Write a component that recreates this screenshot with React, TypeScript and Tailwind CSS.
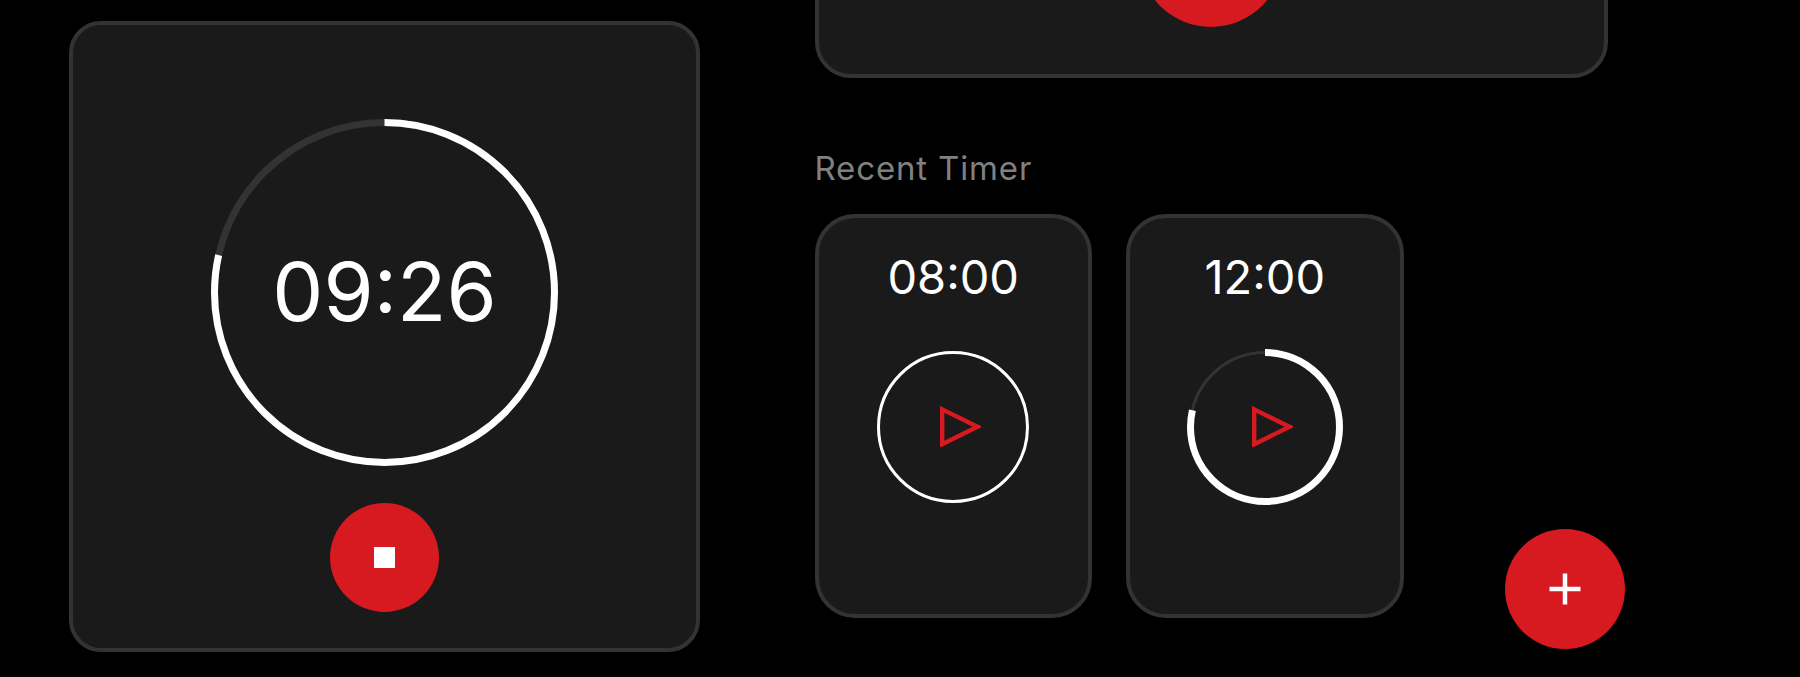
import React from "react";

const INTER = { fontFamily: "Inter, sans-serif" };

function Ring({
  size,
  stroke,
  trackStroke,
  fraction,
}: {
  size: number;
  stroke: number;
  trackStroke: number;
  fraction: number;
}) {
  const r = size / 2 - stroke / 2;
  const c = 2 * Math.PI * r;
  return (
    <svg width={size} height={size} viewBox={`0 0 ${size} ${size}`} className="block">
      <circle cx={size / 2} cy={size / 2} r={r} fill="none" stroke="#333333" strokeWidth={trackStroke} />
      <circle
        cx={size / 2}
        cy={size / 2}
        r={r}
        fill="none"
        stroke="#ffffff"
        strokeWidth={stroke}
        strokeDasharray={`${c * fraction} ${c}`}
        transform={`rotate(-90 ${size / 2} ${size / 2})`}
      />
    </svg>
  );
}

function PlayIcon() {
  return (
    <svg width="41" height="41" viewBox="0 0 41 41" className="block">
      <path d="M2.2 3.4 L37.5 20.8 L2.2 38.2 Z" fill="none" stroke="#d71920" strokeWidth="4.4" strokeLinejoin="miter" />
    </svg>
  );
}

function RecentCard({ time, size, stroke, track, fraction, ringClass }: { time: string; size: number; stroke: number; track: number; fraction: number; ringClass: string }) {
  return (
    <div className="w-[277.5px] h-[404px] rounded-[40px] border-4 border-[#333333] bg-[#1a1a1a] flex flex-col items-center">
      <div className="mt-[26.5px] h-[64px] flex items-center text-[47px] leading-none font-normal text-white">{time}</div>
      <div className={ringClass}>
        <Ring size={size} stroke={stroke} trackStroke={track} fraction={fraction} />
        <div className="absolute inset-0 flex items-center justify-center pl-[15px]">
          <PlayIcon />
        </div>
      </div>
    </div>
  );
}

export default function App() {
  return (
    <div style={INTER} className="relative w-[1800px] h-[677px] overflow-hidden bg-black flex">
      <div className="ml-[69px] mt-[21px] w-[631px] h-[631px] rounded-[32px] border-4 border-[#333333] bg-[#1a1a1a] flex flex-col items-center">
        <div className="relative mt-[94px] w-[347px] h-[347px]">
          <Ring size={347} stroke={7} trackStroke={7} fraction={0.785} />
          <div className="absolute inset-0 flex items-center justify-center text-[81px] leading-none font-normal text-white">09:26</div>
        </div>
        <div className="mt-[37px] w-[109px] h-[109px] rounded-full bg-[#d71920] flex items-center justify-center">
          <div className="w-[21px] h-[21px] bg-white" />
        </div>
      </div>

      <div className="ml-[114.5px] w-[793px] flex flex-col">
        <div className="-mt-[82px] h-[160px] rounded-[36px] border-4 border-[#333333] bg-[#1a1a1a] flex flex-col items-center">
          <div className="mt-[-39px] w-[144px] h-[144px] shrink-0 rounded-full bg-[#d71920]" />
        </div>
        <div className="mt-[70px] text-[33px] leading-[40px] text-[#808080] tracking-[0.85px]">Recent Timer</div>
        <div className="mt-[26px] flex gap-[34px]">
          <RecentCard time="08:00" size={152} stroke={3} track={3} fraction={1} ringClass="relative mt-[40px] mr-[1px] w-[152px] h-[156px] flex items-center justify-center" />
          <RecentCard time="12:00" size={156} stroke={7} track={3} fraction={0.785} ringClass="relative mt-[40px] w-[156px] h-[156px] flex items-center justify-center" />
        </div>
      </div>

      <button className="absolute left-[1505px] top-[529px] w-[120px] h-[120px] rounded-full bg-[#d71920] flex items-center justify-center">
        <svg width="32" height="32" viewBox="0 0 32 32">
          <path d="M16 0.5 V31.5 M0.5 16 H31.5" stroke="#ffffff" strokeWidth="4.5" fill="none" />
        </svg>
      </button>
    </div>
  );
}
